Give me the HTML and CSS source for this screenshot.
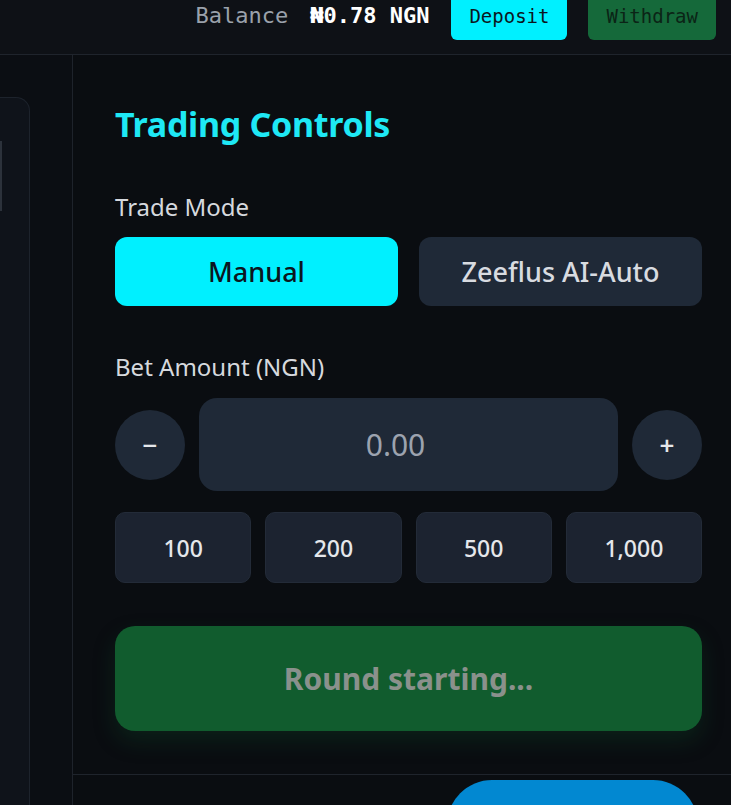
FILE: index.html
```html
<!DOCTYPE html>
<html lang="en">
<head>
<meta charset="utf-8">
<title>Trading Controls</title>
<link rel="stylesheet" href="styles.css">
</head>
<body>
<div class="page">
  <header class="topbar">
    <div class="balance">
      <span class="balance-label">Balance</span>
      <span class="balance-value">₦0.78 NGN</span>
    </div>
    <button class="top-btn deposit">Deposit</button>
    <button class="top-btn withdraw">Withdraw</button>
  </header>
  <div class="layout">
    <aside class="sidebar">
      <div class="side-card">
        <div class="side-track"></div>
      </div>
    </aside>
    <main class="main">
      <section class="controls">
        <h2 class="title">Trading Controls</h2>
        <div class="label mode-label">Trade Mode</div>
        <div class="mode-row">
          <button class="mode-btn active">Manual</button>
          <button class="mode-btn">Zeeflus AI-Auto</button>
        </div>
        <div class="label bet-label">Bet Amount (NGN)</div>
        <div class="stepper">
          <button class="round-btn">−</button>
          <div class="amount">0.00</div>
          <button class="round-btn">+</button>
        </div>
        <div class="presets">
          <button class="preset">100</button>
          <button class="preset">200</button>
          <button class="preset">500</button>
          <button class="preset">1,000</button>
        </div>
        <button class="start-btn">Round starting...</button>
      </section>
      <section class="next">
        <button class="blue-btn"></button>
      </section>
    </main>
  </div>
</div>
</body>
</html>
```

FILE: styles.css
```css
* { box-sizing: border-box; }
html, body {
  margin: 0;
  padding: 0;
  height: 100%;
  overflow: hidden;
  background: #0a0d11;
}
body {
  font-family: "Noto Sans", "Open Sans", sans-serif;
  color: #d1d5db;
}
button {
  font-family: inherit;
  border: none;
  cursor: pointer;
}
.page {
  margin-top: -8px;
}
.topbar {
  height: 63px;
  padding: 0 15px 15px 0;
  display: flex;
  justify-content: flex-end;
  align-items: center;
  gap: 21px;
  background: #0e1116;
  border-bottom: 1px solid #1f242c;
}
.balance {
  display: flex;
  gap: 22px;
  margin-right: 1px;
  font-family: "DejaVu Sans Mono", "Liberation Mono", monospace;
  font-size: 22px;
}
.balance-label { color: #9aa1ab; }
.balance-value { color: #ffffff; font-weight: bold; }
.top-btn {
  height: 48px;
  padding: 1px 18px 0;
  border-radius: 6px;
  font-family: "DejaVu Sans Mono", "Liberation Mono", monospace;
  font-size: 19px;
}
.deposit { background: #00f0ff; color: #0b1620; }
.withdraw { background: #15693a; color: #0b2416; }

.layout {
  display: grid;
  grid-template-columns: 73px 1fr;
  height: 760px;
}
.sidebar {
  background: #0b0e13;
  border-right: 1px solid #1e232b;
  padding-top: 42px;
}
.side-card {
  width: 30px;
  height: 720px;
  background: #0f131a;
  border: 1px solid #1d232c;
  border-left: none;
  border-radius: 0 14px 0 0;
  padding-top: 43px;
}
.side-track {
  width: 2px;
  height: 70px;
  background: #2c323b;
}

.main {
  display: flex;
  flex-direction: column;
}
.controls {
  padding: 48px 29px 43px 42px;
  display: flex;
  flex-direction: column;
  border-bottom: 1px solid #1f242c;
}
.title {
  margin: 0;
  font-size: 34px;
  line-height: 42px;
  font-weight: 700;
  color: #1ee8f5;
  letter-spacing: -0.3px;
}
.label {
  font-size: 24px;
  line-height: 30px;
  color: #d6d9de;
}
.mode-label { margin-top: 47px; }
.mode-row {
  margin-top: 15px;
  display: grid;
  grid-template-columns: 1fr 1fr;
  gap: 21px;
}
.mode-btn {
  height: 69px;
  border-radius: 12px;
  background: #1f2937;
  color: #d8dbe0;
  font-size: 27px;
  font-weight: 500;
}
.mode-btn.active {
  background: #00f0ff;
  color: #0b1620;
}
.bet-label { margin-top: 46px; }
.stepper {
  margin-top: 16px;
  display: flex;
  align-items: center;
  gap: 14px;
}
.round-btn {
  width: 70px;
  height: 70px;
  flex: none;
  border-radius: 50%;
  background: #1f2937;
  color: #e5e7eb;
  font-size: 26px;
  font-weight: 600;
}
.amount {
  flex: 1;
  height: 93px;
  border-radius: 18px;
  background: #1f2937;
  display: flex;
  align-items: center;
  justify-content: center;
  padding-right: 26px;
  font-size: 30px;
  color: #9ca3af;
}
.presets {
  margin-top: 21px;
  display: grid;
  grid-template-columns: repeat(4, 1fr);
  gap: 14px;
}
.preset {
  height: 71px;
  border-radius: 10px;
  background: #1c2330;
  border: 1px solid #232b38;
  color: #e5e7eb;
  font-size: 23px;
  font-weight: 500;
}
.start-btn {
  margin-top: 43px;
  height: 105px;
  border-radius: 20px;
  background: #115c2e;
  color: #8a918c;
  font-size: 30px;
  font-weight: 700;
  box-shadow: 0 10px 22px rgba(17, 92, 46, 0.25);
}
.next {
  display: flex;
  justify-content: flex-end;
  padding: 5px 33px 0 0;
}
.blue-btn {
  width: 251px;
  height: 90px;
  border-radius: 48px;
  background: #0288d1;
}
```
